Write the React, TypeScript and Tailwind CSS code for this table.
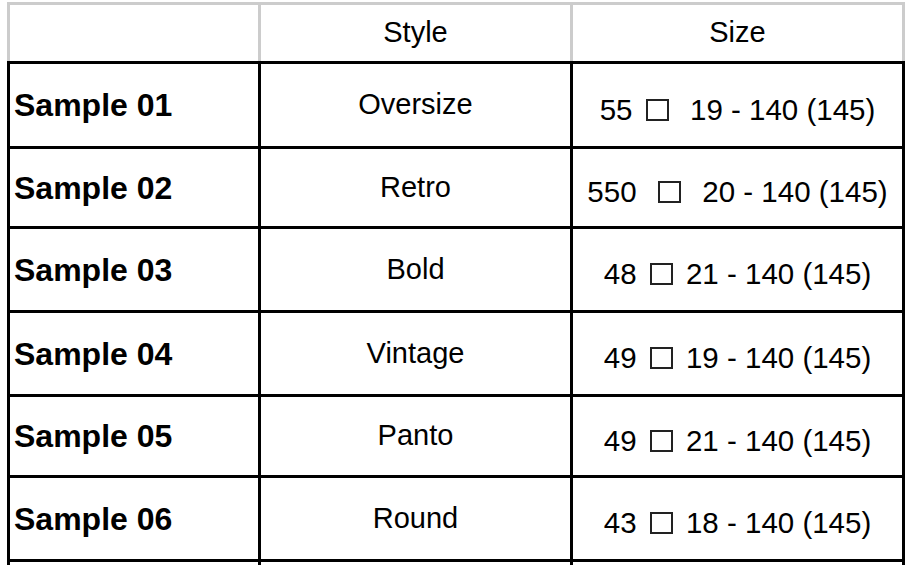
import React from "react";

type Row = {
  name: string;
  style: string;
  pre: string;
  post: string;
  h: string;
};

const rows: Row[] = [
  { name: "Sample 01", style: "Oversize", pre: "55 ", post: "  19 - 140 (145)", h: "h-[88px] border-t-[3px]" },
  { name: "Sample 02", style: "Retro", pre: "550  ", post: "  20 - 140 (145)", h: "h-[80px]" },
  { name: "Sample 03", style: "Bold", pre: "48 ", post: " 21 - 140 (145)", h: "h-[84px]" },
  { name: "Sample 04", style: "Vintage", pre: "49 ", post: " 19 - 140 (145)", h: "h-[84px]" },
  { name: "Sample 05", style: "Panto", pre: "49 ", post: " 21 - 140 (145)", h: "h-[81px]" },
  { name: "Sample 06", style: "Round", pre: "43 ", post: " 18 - 140 (145)", h: "h-[84px]" },
  { name: "", style: "", pre: "", post: "", h: "h-[84px]" },
];

export default function App() {
  return (
    <div className="h-[565px] w-[908px] overflow-hidden bg-white font-['Liberation_Sans',Arial,sans-serif] text-black">
      <div className="ml-[7px] mt-[2px] w-[898px]">
        {/* header */}
        <div className="flex h-[59px] border-l-[3px] border-t-[3px] border-[#cccccc]">
          <div className="w-[251px] border-r-[3px] border-[#cccccc]" />
          <div className="flex w-[312px] items-center justify-center border-r-[3px] border-[#cccccc] text-[29px]">
            Style
          </div>
          <div className="flex w-[332px] items-center justify-center border-r-[3px] border-[#cccccc] text-[29px]">
            Size
          </div>
        </div>
        {rows.map((r, i) => (
          <div key={i} className={`flex border-b-[3px] border-l-[3px] border-black ${r.h}`}>
            <div className="flex w-[251px] items-center border-r-[3px] border-black pl-[4px] text-[32px] font-bold">
              {r.name}
            </div>
            <div className="flex w-[312px] items-center justify-center border-r-[3px] border-black text-[29px]">
              {r.style}
            </div>
            <div className="flex w-[332px] items-center justify-center border-r-[3px] border-black pt-[10px] text-[29.5px]">
              {r.pre && (
                <span className="whitespace-pre">
                  {r.pre}
                  <span className="inline-block w-[33px] text-center">
                    <span className="inline-block h-[22px] w-[23px] border-2 border-[#222222] align-[-1px]" aria-hidden="true" />
                  </span>
                  {r.post}
                </span>
              )}
            </div>
          </div>
        ))}
      </div>
    </div>
  );
}
